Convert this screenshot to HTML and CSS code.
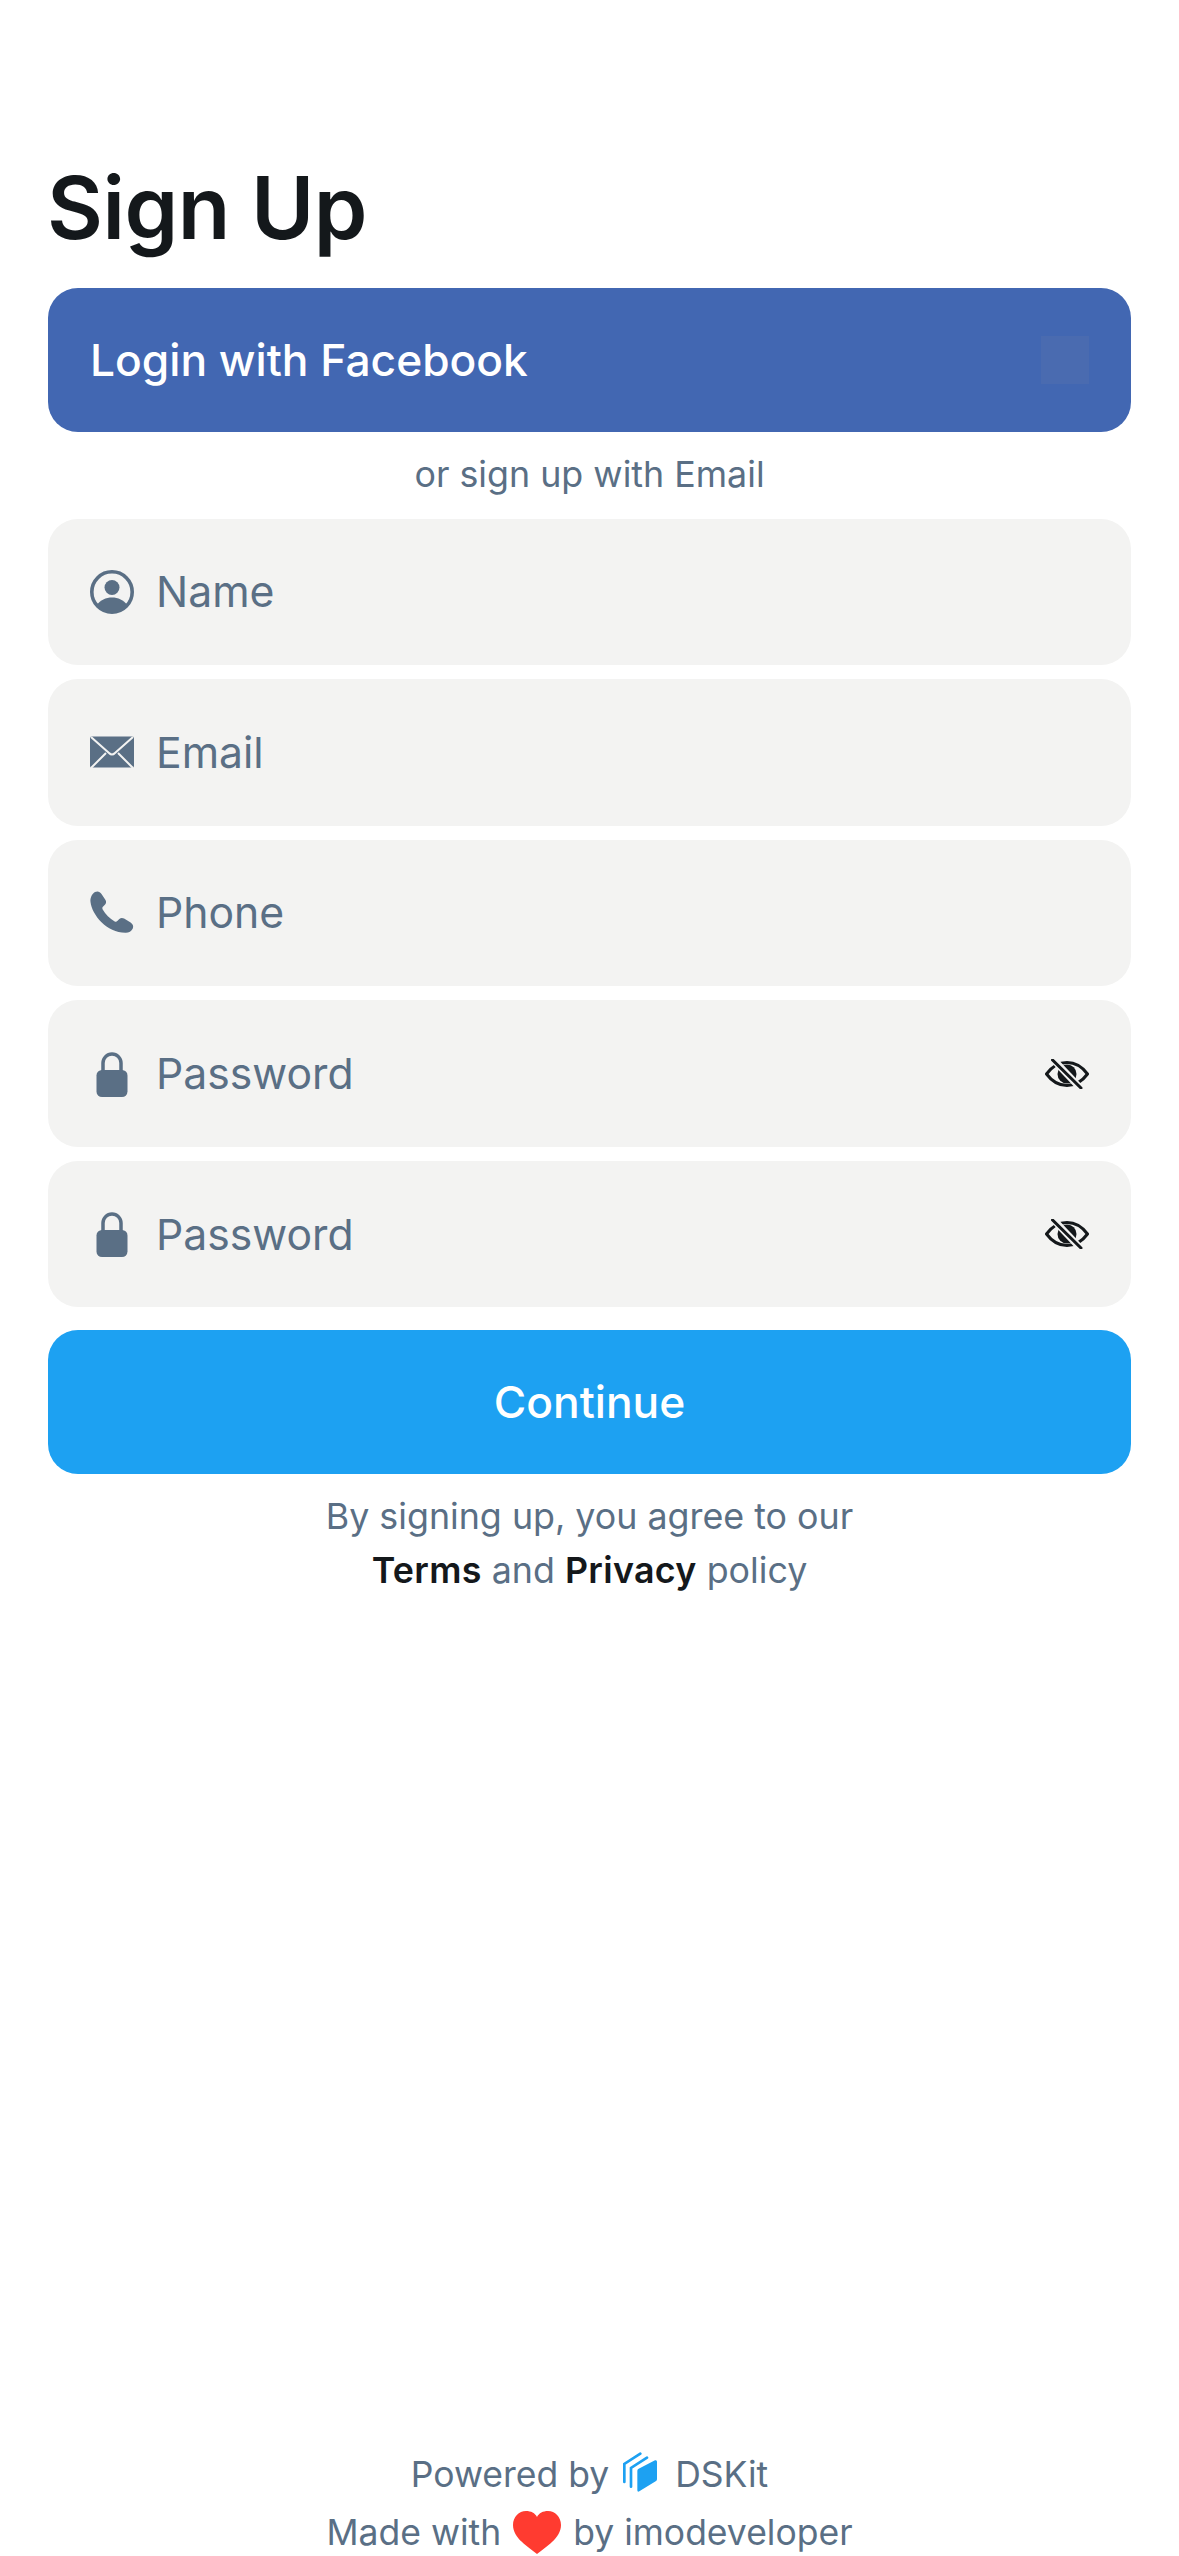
FILE: index.html
```html
<!DOCTYPE html>
<html lang="en">
<head>
    <meta charset="UTF-8">
    <title>Sign Up</title>
    <link rel="stylesheet" href="styles.css">
</head>
<body>
<div class="page">
    <h1 class="title">Sign Up</h1>
    <button class="btn btn-fb"><span>Login with Facebook</span><span class="fb-icon"></span></button>
    <p class="note or">or sign up with Email</p>

    <div class="fields">
        <div class="field">
            <svg class="icon" viewBox="0 0 44 44"><circle cx="22" cy="22" r="20.200" fill="none" stroke="#5a6f85" stroke-width="3.600"/><circle cx="22" cy="17.500" r="7.500" fill="#5a6f85"/><path d="M7 35c3-5 9-7.500 15-7.500S34 30 37 35c-3.500 5-9 8-15 8S10.500 40 7 35z" fill="#5a6f85"/></svg>
            <span class="label">Name</span>
        </div>
        <div class="field">
            <svg class="icon" viewBox="0 0 44 44"><rect y="6.500" width="44" height="31" rx="1.500" fill="#5a6f85"/><path d="M1 7l18 16q3 3 6 0L43 7M1 38l15-15M43 38L28 23" fill="none" stroke="#f3f3f2" stroke-width="2"/></svg>
            <span class="label">Email</span>
        </div>
        <div class="field">
            <svg class="icon" viewBox="0 0 44 44"><path d="M5 1c3-1.500 5 0 6.500 2l4 6c1 1.800.7 3.500-.6 4.800l-2 2c-.7.800-.7 1.700-.2 2.600 2.800 5 7 9 12 12 1 .5 1.800.4 2.600-.3l2-2c1.400-1.300 3-1.500 4.800-.5l6.500 4c2 1.400 3.300 3.500 2.200 6-1.200 2.800-4 4.200-7 4.200C17 42 2 24 .5 11 .1 6.500 2 3 5 1z" fill="#5a6f85"/></svg>
            <span class="label">Phone</span>
        </div>
        <div class="field">
            <svg class="icon" viewBox="0 0 44 44"><path d="M13 20v-9a9 9 0 0 1 18 0v9" fill="none" stroke="#5a6f85" stroke-width="3.500"/><rect x="6.500" y="18" width="31" height="27" rx="5.500" fill="#5a6f85"/></svg>
            <span class="label">Password</span>
            <svg class="eye" viewBox="0 0 44 30"><path d="M1.500 15C7 7.500 14 3.500 22 3.500S37 7.500 42.500 15C37 22.500 30 26.500 22 26.500S7 22.500 1.500 15z" fill="none" stroke="#14181b" stroke-width="3"/><circle cx="22" cy="15" r="9.500" fill="#14181b"/><path d="M7 -1L37 31" stroke="#f3f3f2" stroke-width="7"/><path d="M7.500 1L36 29" stroke="#14181b" stroke-width="3" stroke-linecap="round"/></svg>
        </div>
        <div class="field">
            <svg class="icon" viewBox="0 0 44 44"><path d="M13 20v-9a9 9 0 0 1 18 0v9" fill="none" stroke="#5a6f85" stroke-width="3.500"/><rect x="6.500" y="18" width="31" height="27" rx="5.500" fill="#5a6f85"/></svg>
            <span class="label">Password</span>
            <svg class="eye" viewBox="0 0 44 30"><path d="M1.500 15C7 7.500 14 3.500 22 3.500S37 7.500 42.500 15C37 22.500 30 26.500 22 26.500S7 22.500 1.500 15z" fill="none" stroke="#14181b" stroke-width="3"/><circle cx="22" cy="15" r="9.500" fill="#14181b"/><path d="M7 -1L37 31" stroke="#f3f3f2" stroke-width="7"/><path d="M7.500 1L36 29" stroke="#14181b" stroke-width="3" stroke-linecap="round"/></svg>
        </div>
    </div>

    <button class="btn btn-main">Continue</button>
    <p class="note terms">By signing up, you agree to our<br><b>Terms</b> and <b>Privacy</b> policy</p>

    <div class="footer">
        <div class="foot-line"><span>Powered by</span>
            <svg class="logo" viewBox="0 0 102 120"><path d="M43 56Q43 52 47 50L96 25Q102 23 102 29V82Q102 86 98 88L49 118Q43 121 43 114z" fill="#1da1f2"/><path d="M4 90V36L52 5M24 104V48L72 17" fill="none" stroke="#1da1f2" stroke-width="8" stroke-linecap="round"/></svg>
            <span class="dskit">DSKit</span></div>
        <div class="foot-line"><span>Made with</span>
            <svg class="heart" viewBox="0 0 48 43"><path d="M24 43C14 35 0 27 0 14 0 6 6 0 13 0c5 0 9 2 11 6 2-4 6-6 11-6 7 0 13 6 13 14 0 13-14 21-24 29z" fill="#ff3b30"/></svg>
            <span>by imodeveloper</span></div>
    </div>
</div>
</body>
</html>
```

FILE: styles.css
```css
body { margin: 0; background-color: #ffffff; font-family: "Inter", "Liberation Sans", sans-serif; color: #5a6f85; }
.page { height: 2556px; box-sizing: border-box; padding: 150px 48px 0; display: flex; flex-direction: column; }
.title { margin: 0 0 0 -1px; font-size: 86px; line-height: 116px; font-weight: 600; color: #14181b; letter-spacing: -0.5px; }
.btn { display: flex; align-items: center; height: 144px; border: none; border-radius: 30px; color: #ffffff; font-family: inherit; font-size: 44.3px; font-weight: 500; width: 100%; flex-shrink: 0; }
.btn-fb { margin-top: 22px; padding: 0 42px; background-color: #4267b2; justify-content: space-between; }
.fb-icon { width: 48px; height: 48px; background-color: #4a6bb0; }
.note { margin: 0; text-align: center; font-size: 35.8px; line-height: 54px; }
.or { margin-top: 15px; }
.fields { margin-top: 17.5px; display: flex; flex-direction: column; gap: 14px; }
.field { display: flex; align-items: center; height: 146.6px; padding: 0 42px; border-radius: 30px; background-color: #f3f3f2; }
.icon { width: 44px; height: 44px; flex-shrink: 0; overflow: visible; }
.label { margin-left: 22px; font-size: 42.7px; flex: 1; }
.eye { width: 44px; height: 30px; flex-shrink: 0; }
.btn-main { margin-top: 22.6px; justify-content: center; background-color: #1da1f2; }
.terms { margin-top: 15px; }
.terms b { font-weight: 600; color: #14181b; letter-spacing: 0.3px; }
.footer { margin-top: auto; display: flex; flex-direction: column; gap: 10px; font-size: 35.5px; }
.foot-line { display: flex; justify-content: center; align-items: center; gap: 12px; height: 48px; }
.logo { width: 34px; height: 40px; margin: 0 4px 4px 2px; }
.dskit { margin-left: 2px; }
.heart { width: 48px; height: 43px; }
```
